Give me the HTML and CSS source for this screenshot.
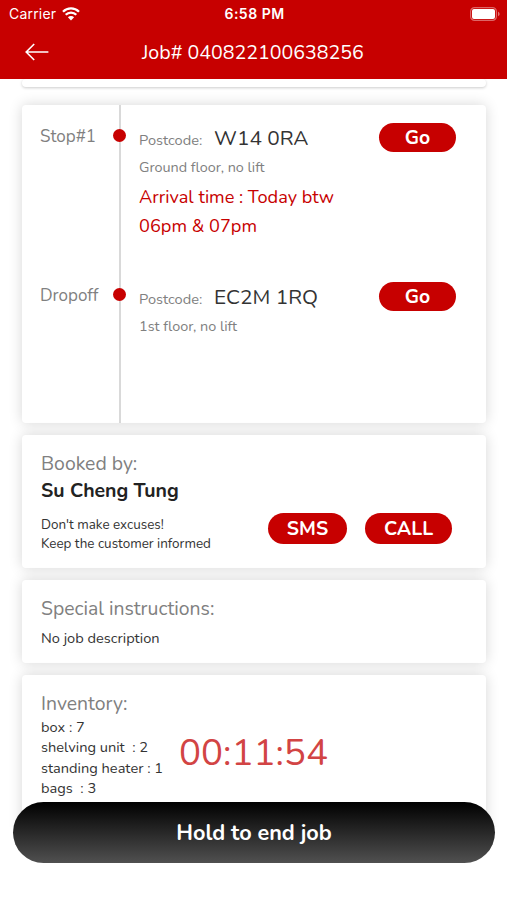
FILE: index.html
```html
<!DOCTYPE html>
<html lang="en">
<head>
    <meta charset="UTF-8">
    <meta name="viewport" content="width=device-width, initial-scale=1.0">
    <title>Job# 040822100638256</title>
    <link rel="stylesheet" href="styles.css">
</head>
<body>
    <header class="header">
        <div class="status-bar">
            <div class="carrier">
                <span>Carrier</span>
                <svg class="wifi" viewBox="0 0 18 14" width="18" height="14">
                    <path d="M1 4.7a11.4 11.4 0 0 1 16 0M3.7 7.8a7.5 7.5 0 0 1 10.6 0" fill="none" stroke="#fff" stroke-width="2.3"/>
                    <path d="M9 13.4L5.9 10.3a4.4 4.4 0 0 1 6.2 0z" fill="#fff"/>
                </svg>
            </div>
            <span class="clock">6:58 PM</span>
            <div class="power">
                <svg class="battery" viewBox="0 0 30 14" width="30" height="14">
                    <rect x=".6" y=".6" width="25.8" height="12.8" rx="4" fill="none" stroke="#fff" stroke-opacity=".4" stroke-width="1.2"/>
                    <rect x="2" y="2" width="23" height="10" rx="2" fill="#fff"/>
                    <path d="M28 4.8v4.4c1-.4 1.6-1.2 1.6-2.2S29 5.2 28 4.8z" fill="#fff" fill-opacity=".45"/>
                </svg>
            </div>
        </div>
        <div class="title-bar">
            <svg class="back" viewBox="0 0 24 18" width="24" height="18">
                <path d="M9.2 1L1.2 9l8 8M1.2 9H23.4" fill="none" stroke="#fff" stroke-width="1.6"/>
            </svg>
            <h1 class="title">Job# 040822100638256</h1>
        </div>
    </header>

    <main class="content">
        <section class="card card-previous"></section>

        <section class="card route">
            <div class="stop">
                <div class="stop-label">Stop#1</div>
                <div class="track"><span class="dot"></span></div>
                <div class="stop-info">
                    <div class="postcode-row">
                        <span class="postcode-label">Postcode:</span>
                        <span class="postcode">W14 0RA</span>
                        <button class="btn btn-go">Go</button>
                    </div>
                    <div class="floor">Ground floor, no lift</div>
                    <div class="arrival">Arrival time : Today btw<br>06pm &amp; 07pm</div>
                </div>
            </div>
            <div class="stop">
                <div class="stop-label">Dropoff</div>
                <div class="track"><span class="dot"></span></div>
                <div class="stop-info">
                    <div class="postcode-row">
                        <span class="postcode-label">Postcode:</span>
                        <span class="postcode">EC2M 1RQ</span>
                        <button class="btn btn-go">Go</button>
                    </div>
                    <div class="floor">1st floor, no lift</div>
                </div>
            </div>
        </section>

        <section class="card booked">
            <h2 class="heading">Booked by:</h2>
            <div class="customer">Su Cheng Tung</div>
            <div class="contact">
                <p class="note">Don't make excuses!<br>Keep the customer informed</p>
                <button class="btn btn-sms">SMS</button>
                <button class="btn btn-call">CALL</button>
            </div>
        </section>

        <section class="card special">
            <h2 class="heading">Special instructions:</h2>
            <p class="description">No job description</p>
        </section>

        <section class="card inventory">
            <h2 class="heading">Inventory:</h2>
            <ul class="items">
                <li>box : 7</li>
                <li>shelving unit&nbsp; : 2</li>
                <li>standing heater : 1</li>
                <li>bags&nbsp; : 3</li>
            </ul>
        </section>
    </main>

    <div class="timer">00:11:54</div>
    <button class="end-job">Hold to end job</button>
</body>
</html>
```

FILE: styles.css
```css
* {
    box-sizing: border-box;
}

body {
    margin: 0;
    height: 900px;
    overflow: hidden;
    position: relative;
    background-color: #fff;
    color: #333;
    font-family: Nunito, Lato, sans-serif;
}

h1, h2, p, ul {
    margin: 0;
    padding: 0;
    font-weight: 400;
}

button {
    padding: 0;
    border: none;
    color: #fff;
    font-family: inherit;
    font-weight: 700;
}

.header {
    height: 79px;
    background-color: #c70000;
    color: #fff;
}

.status-bar {
    display: flex;
    align-items: center;
    height: 27px;
    padding: 0 7px 0 9px;
    font-family: Inter, sans-serif;
    font-size: 14px;
}

.carrier, .power {
    flex: 1;
    display: flex;
    align-items: center;
}

.carrier {
    gap: 6px;
    letter-spacing: 0.2px;
}

.power {
    justify-content: flex-end;
}

.clock {
    font-weight: 600;
    letter-spacing: 0.5px;
}

.title-bar {
    display: flex;
    align-items: center;
    height: 50px;
    padding-left: 25px;
}

.title {
    margin-left: 93px;
    font-size: 19.6px;
    white-space: nowrap;
}

.content {
    display: flex;
    flex-direction: column;
    gap: 12px;
    height: 748px;
    padding: 0 21px 0 22px;
    overflow: hidden;
}

.card {
    flex: none;
    border-radius: 4px;
    background-color: #fff;
    box-shadow: 0 0 14px rgba(0, 0, 0, 0.16);
}

.card-previous {
    height: 8px;
    margin-bottom: 6px;
    box-shadow: 0 1px 3px rgba(0, 0, 0, 0.2);
}

.route {
    height: 318px;
}

.stop {
    display: flex;
    height: 159px;
}

.stop-label {
    width: 90px;
    padding: 21px 0 0 18px;
    color: #808080;
    font-size: 17px;
    line-height: 22px;
}

.track {
    width: 15px;
    padding-top: 24px;
    background: linear-gradient(#d9d9d9, #d9d9d9) center / 2px 100% no-repeat;
}

.dot {
    display: block;
    width: 13px;
    height: 13px;
    margin-left: 1px;
    border-radius: 50%;
    background-color: #c70000;
}

.stop-info {
    flex: 1;
    padding: 18px 30px 0 12px;
}

.postcode-row {
    display: flex;
    align-items: baseline;
    height: 30px;
}

.postcode-label {
    width: 75px;
    color: #808080;
    font-size: 14.6px;
}

.postcode {
    font-size: 20.8px;
    line-height: 31px;
}

.btn {
    border-radius: 16px;
    background-color: #c70000;
    font-size: 19.4px;
}

.btn-go {
    align-self: flex-start;
    width: 77px;
    height: 29px;
    margin-left: auto;
}

.floor {
    color: #808080;
    font-size: 14.4px;
    line-height: 28px;
}

.arrival {
    padding-top: 2px;
    color: #c70000;
    font-size: 18.2px;
    line-height: 29px;
}

.booked {
    height: 133px;
    padding: 16px 34px 0 19px;
}

.heading {
    color: #808080;
    font-size: 19.4px;
    line-height: 26px;
}

.customer {
    font-size: 19.5px;
    font-weight: 700;
    line-height: 27px;
    color: #222;
}

.contact {
    display: flex;
    align-items: flex-start;
    margin-top: 9px;
}

.note {
    flex: 1;
    padding-top: 2px;
    font-size: 13.45px;
    line-height: 19px;
}

.btn-sms {
    width: 79px;
    height: 31px;
}

.btn-call {
    width: 87px;
    height: 31px;
    margin-left: 18px;
}

.special {
    height: 83px;
    padding: 16px 19px;
}

.description {
    margin-top: 6px;
    font-size: 14.6px;
    line-height: 20px;
}

.inventory {
    height: 220px;
    padding: 16px 19px;
}

.items {
    list-style: none;
    font-size: 14.6px;
    line-height: 20.3px;
}

.timer {
    position: absolute;
    top: 731px;
    left: 0;
    width: 507px;
    text-align: center;
    color: #d24444;
    font-size: 36.7px;
    line-height: 44px;
}

.end-job {
    position: absolute;
    top: 802px;
    left: 13px;
    width: 482px;
    height: 61px;
    border-radius: 31px;
    background: linear-gradient(#000, #505050);
    font-size: 21.6px;
}
```
